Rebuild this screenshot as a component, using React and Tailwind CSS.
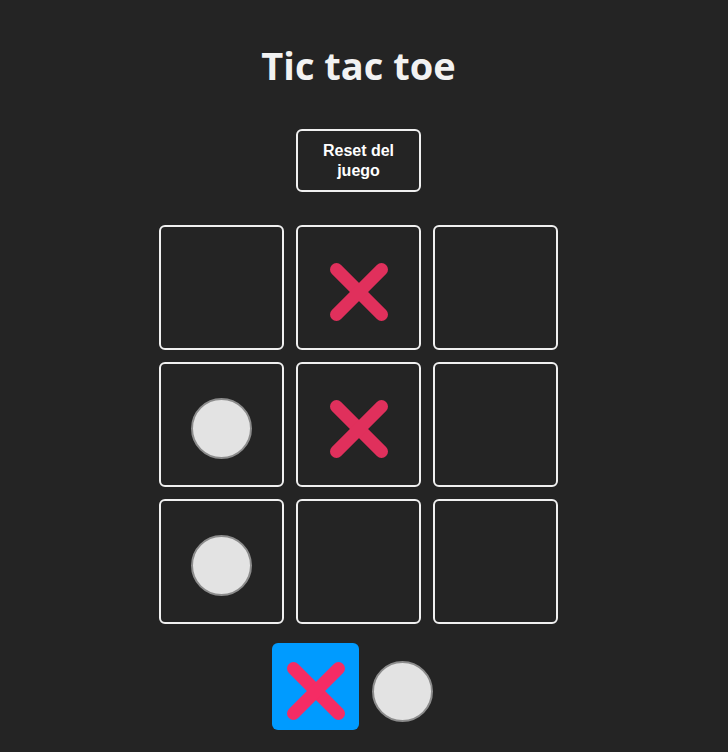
import React from 'react'

const board = ['', 'x', '', 'o', 'x', '', 'o', '', '']

function Cross({ color = '#e0305c' }) {
  return (
    <svg width="58" height="58" viewBox="0 0 58 58">
      <line x1="6.5" y1="6.5" x2="51.5" y2="51.5" stroke={color} strokeWidth="13" strokeLinecap="round" />
      <line x1="51.5" y1="6.5" x2="6.5" y2="51.5" stroke={color} strokeWidth="13" strokeLinecap="round" />
    </svg>
  )
}

function Circle() {
  return <div className="w-[61px] h-[61px] rounded-full bg-[#e3e3e3] border-2 border-[#8c8c8c]" />
}

function Square({ value }) {
  return (
    <div className="w-[125px] h-[125px] border-2 border-[#f0f0f0] rounded-[6px] flex items-center justify-center pt-[8px]">
      {value === 'x' && <Cross />}
      {value === 'o' && <Circle />}
    </div>
  )
}

export default function App() {
  return (
    <div className="min-h-[752px] bg-[#242424] text-white font-['Open_Sans',sans-serif]">
      <main className="flex flex-col items-center pt-[40px] pr-[11px]">
        <h1 className="h-[50px] leading-[50px] text-[38px] font-bold text-[#f2f2f2]">Tic tac toe</h1>
        <button className="mt-[39px] w-[125px] h-[63px] px-[20px] border-2 border-[#f0f0f0] rounded-[6px] text-[16px] leading-[20px] font-bold font-['Liberation_Sans',Arial,sans-serif] text-white">
          Reset del juego
        </button>
        <section className="mt-[33px] grid grid-cols-[repeat(3,125px)] gap-[12px]">
          {board.map((v, i) => (
            <Square key={i} value={v} />
          ))}
        </section>
        <section className="mt-[19px] mr-[12px] flex gap-[13px]">
          <div className="w-[87px] h-[87px] rounded-[6px] bg-[#009bff] flex items-center justify-center pt-[8px]">
            <Cross color="#f52c64" />
          </div>
          <div className="mt-[18px]">
            <Circle />
          </div>
        </section>
      </main>
    </div>
  )
}
